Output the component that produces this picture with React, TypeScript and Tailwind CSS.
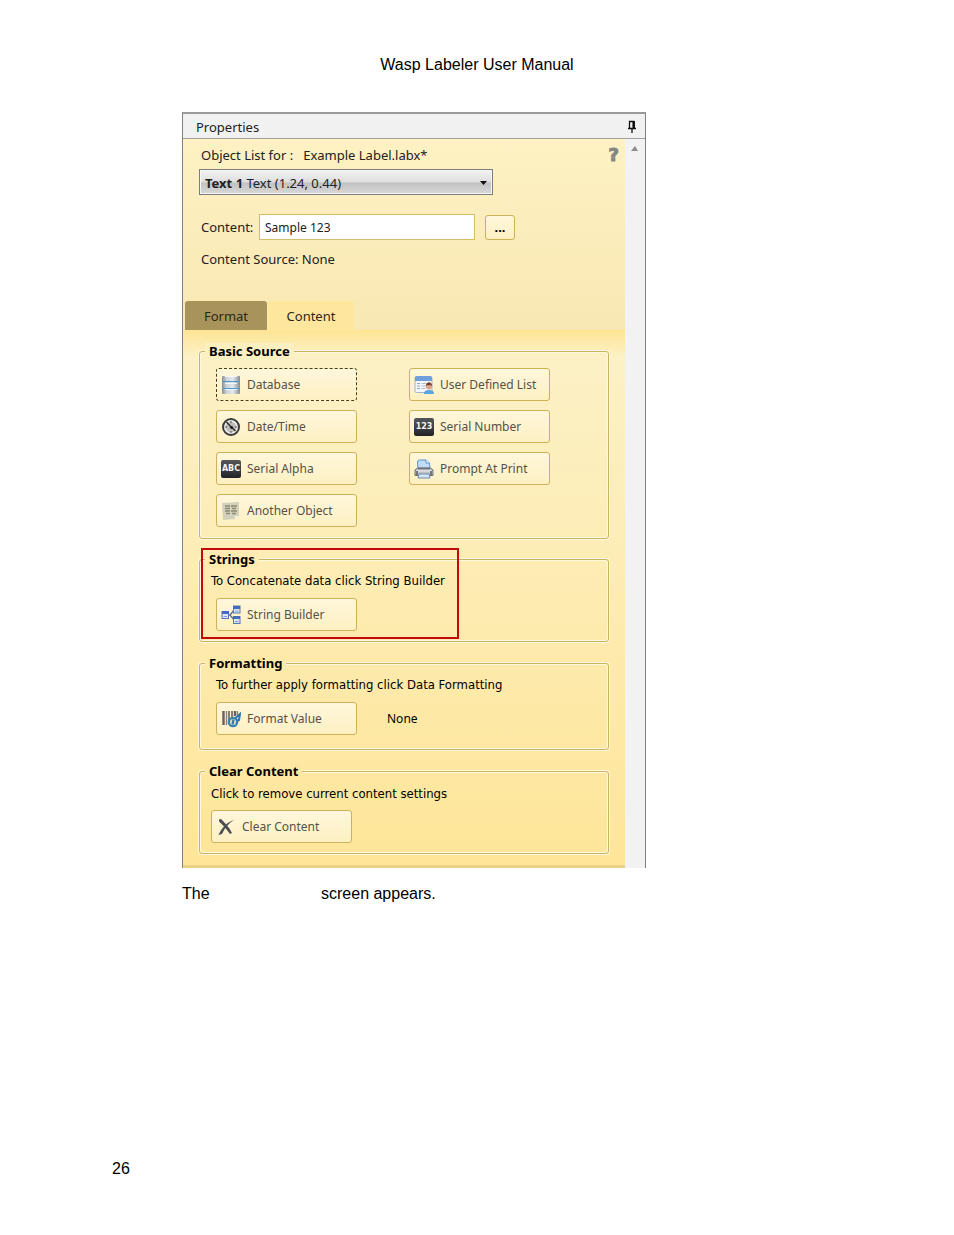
import { FC, ReactNode } from 'react';

const DatabaseIcon = () => (
    <svg width="20" height="20" viewBox="0 0 20 20" aria-hidden="true">
        <defs>
            <linearGradient id="db" x1="0" x2="1">
                <stop offset="0" stopColor="#888e94" />
                <stop offset="0.25" stopColor="#cdd2d7" />
                <stop offset="0.6" stopColor="#e6e9ec" />
                <stop offset="1" stopColor="#868c92" />
            </linearGradient>
        </defs>
        <rect x="1" y="1" width="18" height="18" rx="1" fill="url(#db)" />
        <path d="M4 1h12v1H4zM4 8h12v1H4zM4 14h12v1H4z" fill="#f3f6f8" />
        <path d="M1 6.5h18M1 13.5h18" stroke="#4a9bd0" strokeWidth="1" />
    </svg>
);

const ClockIcon = () => (
    <svg width="20" height="20" viewBox="0 0 20 20" aria-hidden="true">
        <circle cx="10" cy="10" r="8" fill="#bdbdb9" stroke="#3b3b3b" strokeWidth="2" />
        <circle cx="10" cy="10" r="6" fill="none" stroke="#efefec" strokeWidth="1.5" />
        <path d="M10 4v2M10 14v2M4 10h2M14 10h2" stroke="#555" />
        <path d="M5.5 5l5 5.5M14.5 14l-4-4" stroke="#333" strokeWidth="1.6" />
        <circle cx="10.5" cy="10.5" r="1.4" fill="#222" />
    </svg>
);

const BadgeIcon: FC<{ text: string }> = ({ text }) => (
    <span
        aria-hidden="true"
        className="flex h-[18px] w-5 items-center justify-center rounded-xs bg-linear-to-b from-[#55565a] via-[#3e3f43] to-[#222327] font-['DejaVu_Sans',sans-serif] text-[8px] leading-none font-bold text-[#f4f4f4]">
        {text}
    </span>
);

const ObjectIcon = () => (
    <svg width="20" height="20" viewBox="0 0 20 20" aria-hidden="true">
        <path d="M1 2l17-1v14l-4 3-12 1z" fill="#d3d0bb" />
        <path d="M18 15l-4 3v-3z" fill="#f5f2e2" />
        <path
            d="M4 5h5M10 5h6M4 7.5h5M11 7.5h4M4 10h5M10 10h6M5 12.5h4M11 12.5h4"
            stroke="#8b8975"
            strokeWidth="1.6"
        />
    </svg>
);

const UserListIcon = () => (
    <svg width="20" height="20" viewBox="0 0 20 20" aria-hidden="true">
        <rect x="1" y="1.5" width="17" height="16" rx="1.5" fill="#f4f6f9" stroke="#a3b3c8" />
        <path d="M1 3q0-2 2-2h13q2 0 2 2v3H1z" fill="#6f9fdd" />
        <path d="M3 8.5h3M3 11h3M3 13.5h3" stroke="#8fa6c4" />
        <path d="M7.5 8.5h9M7.5 11h5M7.5 13.5h4" stroke="#b9bfc9" />
        <path d="M10 19c0-3 2-4 5-4s5 1 5 4z" fill="#5aa5dd" />
        <circle cx="15" cy="11.5" r="3" fill="#e2a184" />
        <path d="M12 11c0-5 6-5 6 0-2-1.5-4-1.5-6 0z" fill="#7c3d2c" />
    </svg>
);

const PrinterIcon = () => (
    <svg width="20" height="20" viewBox="0 0 20 20" aria-hidden="true">
        <path d="M4 10L3.5 3Q3.5 1 5.5 1H12l3.5 3 .5 6z" fill="#bfddf8" stroke="#5f94cf" />
        <path d="M12 1v3h3.5" fill="#fff" stroke="#5f94cf" />
        <path d="M1 11l2.5-2h13L19 11v5.5H1z" fill="#bfc1c5" stroke="#6b6e75" />
        <path d="M4 9.5h12" stroke="#6a6e75" strokeWidth="1.5" />
        <path d="M2 12h16" stroke="#f0f1f3" />
        <path d="M3 12v4M17 12v4" stroke="#585b61" strokeWidth="1.5" />
        <path d="M5 15h10l1 4H4z" fill="#d6e7f7" stroke="#6d89ab" />
    </svg>
);

const StringIcon = () => (
    <svg width="20" height="20" viewBox="0 0 20 20" aria-hidden="true">
        <path d="M7 10h2l5-6M9 10l5 6" fill="none" stroke="#5e6f9c" strokeWidth="1.3" />
        <g fill="#dfe7f7" stroke="#5674b8">
            <rect x="1" y="6.5" width="6.5" height="7" />
            <rect x="12.5" y="1" width="6.5" height="7" />
            <rect x="12.5" y="11.5" width="6.5" height="7" />
        </g>
        <path d="M1 6h7v3H1zM12 1h7v3h-7zM12 11h7v3h-7z" fill="#456bbd" />
        <path d="M2.5 11.5H6M14 6h3.5M14 16.5h3.5" stroke="#7f9bd4" />
    </svg>
);

const FormatIcon = () => (
    <svg width="20" height="20" viewBox="0 0 20 20" aria-hidden="true">
        <path d="M2.5 2v14M14 2v5" stroke="#66615a" strokeWidth="2.4" />
        <path d="M5.5 2v14M16.5 2v4" stroke="#8a857b" strokeWidth="1.4" />
        <path d="M8 2v12M11 2v6" stroke="#78736b" strokeWidth="1.8" />
        <circle cx="12" cy="13" r="4.2" fill="#d9d6bd" stroke="#3583bd" strokeWidth="2.2" />
        <path d="M12.5 10.5l-1 5M14.5 9L19 5l-1 6-2 1" fill="none" stroke="#2c76b2" strokeWidth="2" />
    </svg>
);

const ClearIcon = () => (
    <svg width="20" height="20" viewBox="0 0 20 20" aria-hidden="true">
        <path d="M3 2.5L5 2c4 4 8 8 11 14l-2 1C10.5 12 7 8 3 4.5z" fill="#4d4f54" />
        <path d="M18 3C13 6 8.5 11 6 17l-3.5 1C5.5 11 11 5 18 3z" fill="#4d4f54" />
    </svg>
);

const PinIcon = () => (
    <svg width="10" height="14" viewBox="0 0 10 14" aria-hidden="true">
        <path d="M2.5 8V1.5h4V8M1 8.5h8M5 9v4" fill="none" stroke="#111" strokeWidth="1.3" />
        <path d="M5.5 1H8v7H5.5z" fill="#111" />
    </svg>
);

const SourceButton: FC<{ icon: ReactNode; label: string; focused?: boolean }> = (props) => {
    const { icon, label, focused } = props;

    return (
        <button
            type="button"
            className={`flex h-[33px] w-[141px] items-center gap-[6px] rounded-[3px] border bg-linear-to-b from-[#fff7dc] to-[#fdf0c2] pl-1 text-left text-[#55524a] ${
                focused ? 'border-dashed border-[#4a3d10]' : 'border-[#cdb25a]'
            }`}>
            {icon}
            <span>{label}</span>
        </button>
    );
};

const Hint: FC<{ children: ReactNode }> = ({ children }) => (
    <p className="font-['DejaVu_Sans_Condensed','DejaVu_Sans',sans-serif] text-[13px]">
        {children}
    </p>
);

const Group: FC<{ title: string; legendClass: string; className: string; children: ReactNode }> = (
    props,
) => {
    const { title, legendClass, className, children } = props;

    return (
        <fieldset className="rounded-[3px] border border-[#cbb365] shadow-[0_0_0_1px_#fff8dc,inset_0_0_0_1px_#fff8dc]">
            <legend
                className={`ml-[5px] px-1 text-[13px] leading-4 font-bold text-black ${legendClass}`}>
                {title}
            </legend>
            <div className={className}>{children}</div>
        </fieldset>
    );
};

const PropertiesPanel = () => (
    <section className="w-full max-w-[464px] border-x border-t-2 border-x-[#808080] border-t-[#9b9b9b] font-['Noto_Sans',sans-serif] text-[12px] leading-[18px] text-[#222]">
        <header className="flex h-[25px] items-center justify-between border-b border-[#a0a0a0] bg-[#f1f1f1] pt-px pr-2 pl-[13px] text-[13px]">
            <h2>Properties</h2>
            <button type="button" aria-label="Pin panel">
                <PinIcon />
            </button>
        </header>

        <div className="flex">
            <div className="min-w-0 flex-1">
                <div className="bg-linear-to-b from-[#fef1c3] to-[#f8e8b3] text-[13px]">
                    <div className="flex items-center justify-between pt-[7px] pr-[6px] pl-[18px]">
                        <p className="flex gap-[10px]">
                            <label htmlFor="object">Object List for :</label>
                            <span>Example Label.labx*</span>
                        </p>
                        <button
                            type="button"
                            aria-label="Help"
                            className="font-['DejaVu_Sans',sans-serif] text-[18px] leading-4 font-bold text-[#858585] [-webkit-text-stroke:1px_#858585]">
                            ?
                        </button>
                    </div>

                    <div className="relative mt-[5px] ml-4 h-[26px] w-[294px] max-w-full">
                        <select
                            id="object"
                            className="size-full appearance-none border border-[#7d7d80] bg-[#f6f6f6] text-transparent">
                            <option value="text-1" aria-label="Text 1 Text (1.24, 0.44)" />
                        </select>
                        <div className="pointer-events-none absolute inset-[2px] flex items-center justify-between bg-[linear-gradient(#f1f1f1,#dedede_50%,#c2c2c2_54%,#d6d6d6)] pt-px pr-1 pl-1">
                            <span>
                                <b>Text 1</b> Text (1.24, 0.44)
                            </span>
                            <svg width="7" height="4" viewBox="0 0 7 4" aria-hidden="true">
                                <path d="M0 0h7L3.5 4z" fill="#111" />
                            </svg>
                        </div>
                    </div>

                    <div className="mt-[19px] flex items-center pl-[18px]">
                        <label htmlFor="content" className="w-[58px]">
                            Content:
                        </label>
                        <input
                            id="content"
                            type="text"
                            defaultValue="Sample 123"
                            className="h-[26px] w-[216px] border border-[#d6bd66] bg-white px-[5px] pt-px text-[12px]"
                        />
                        <button
                            type="button"
                            className="ml-[10px] h-[25px] w-[30px] rounded-[3px] border border-[#cdb25a] bg-linear-to-b from-[#fff7dc] to-[#fdf0c2] font-bold text-black">
                            ...
                        </button>
                    </div>

                    <p className="mt-[10px] pl-[18px]">Content Source: None</p>

                    <div role="tablist" className="mt-[33px] flex gap-px pl-[2px] text-[#2b2718]">
                        <button
                            type="button"
                            role="tab"
                            aria-selected="false"
                            className="h-[29px] w-[82px] rounded-t-[3px] bg-[#a8945a]">
                            Format
                        </button>
                        <button
                            type="button"
                            role="tab"
                            aria-selected="true"
                            className="h-[29px] w-[86px] rounded-t-[3px] bg-[#fee79c]">
                            Content
                        </button>
                    </div>
                </div>

                <div className="border-b-[3px] border-[#ecd285] bg-linear-to-b from-[#fee594] from-0% via-[#fcf1c6] via-5% to-[#fee598] to-100% px-4 pt-[13px] pb-[11px]">
                    <Group
                        title="Basic Source"
                        legendClass="bg-[#fcefc0]"
                        className="pt-[9px] pb-[11px] pl-4">
                        <div className="grid w-fit grid-flow-col grid-rows-4 gap-x-[52px] gap-y-[9px]">
                            <SourceButton icon={<DatabaseIcon />} label="Database" focused />
                            <SourceButton icon={<ClockIcon />} label="Date/Time" />
                            <SourceButton icon={<BadgeIcon text="ABC" />} label="Serial Alpha" />
                            <SourceButton icon={<ObjectIcon />} label="Another Object" />
                            <SourceButton icon={<UserListIcon />} label="User Defined List" />
                            <SourceButton icon={<BadgeIcon text="123" />} label="Serial Number" />
                            <SourceButton icon={<PrinterIcon />} label="Prompt At Print" />
                        </div>
                    </Group>

                    <div className="relative mt-3">
                        <Group
                            title="Strings"
                            legendClass="bg-[#fdebb2]"
                            className="pt-[5px] pb-[10px] pl-[11px] text-black">
                            <Hint>To Concatenate data click String Builder</Hint>
                            <div className="mt-2 pl-[5px]">
                                <SourceButton icon={<StringIcon />} label="String Builder" />
                            </div>
                        </Group>
                        <div className="pointer-events-none absolute -top-[3px] left-[2px] h-[91px] w-[258px] border-2 border-[#c4090d]" />
                    </div>

                    <div className="mt-[13px]">
                        <Group
                            title="Formatting"
                            legendClass="bg-[#fde9a8]"
                            className="pt-[5px] pb-[14px] pl-4 text-black">
                            <Hint>To further apply formatting click Data Formatting</Hint>
                            <div className="mt-2 flex items-center gap-[30px]">
                                <SourceButton icon={<FormatIcon />} label="Format Value" />
                                <span>None</span>
                            </div>
                        </Group>
                    </div>

                    <div className="mt-[13px]">
                        <Group
                            title="Clear Content"
                            legendClass="bg-[#fee7a0]"
                            className="pt-[6px] pb-[10px] pl-[11px] text-black">
                            <Hint>Click to remove current content settings</Hint>
                            <div className="mt-[7px]">
                                <SourceButton icon={<ClearIcon />} label="Clear Content" />
                            </div>
                        </Group>
                    </div>
                </div>
            </div>

            <div className="w-5 bg-[#f2f2f2] pt-[7px] pl-[6px]">
                <svg width="7" height="5" viewBox="0 0 7 5" aria-hidden="true">
                    <path d="M0 5h7L4 0z" fill="#8c8c8c" />
                </svg>
            </div>
        </div>
    </section>
);

export default function App() {
    return (
        <div className="min-h-screen bg-white px-28 pt-[55px] pb-14 font-['Liberation_Sans',Arial,sans-serif] text-[16px] leading-5 text-black">
            <header className="text-center">Wasp Labeler User Manual</header>

            <main className="mt-[37px] pl-[70px]">
                <PropertiesPanel />
                <p className="mt-4 flex">
                    <span className="w-[139px]">The</span>
                    <span>screen appears.</span>
                </p>
            </main>

            <footer className="mt-[255px]">26</footer>
        </div>
    );
}
